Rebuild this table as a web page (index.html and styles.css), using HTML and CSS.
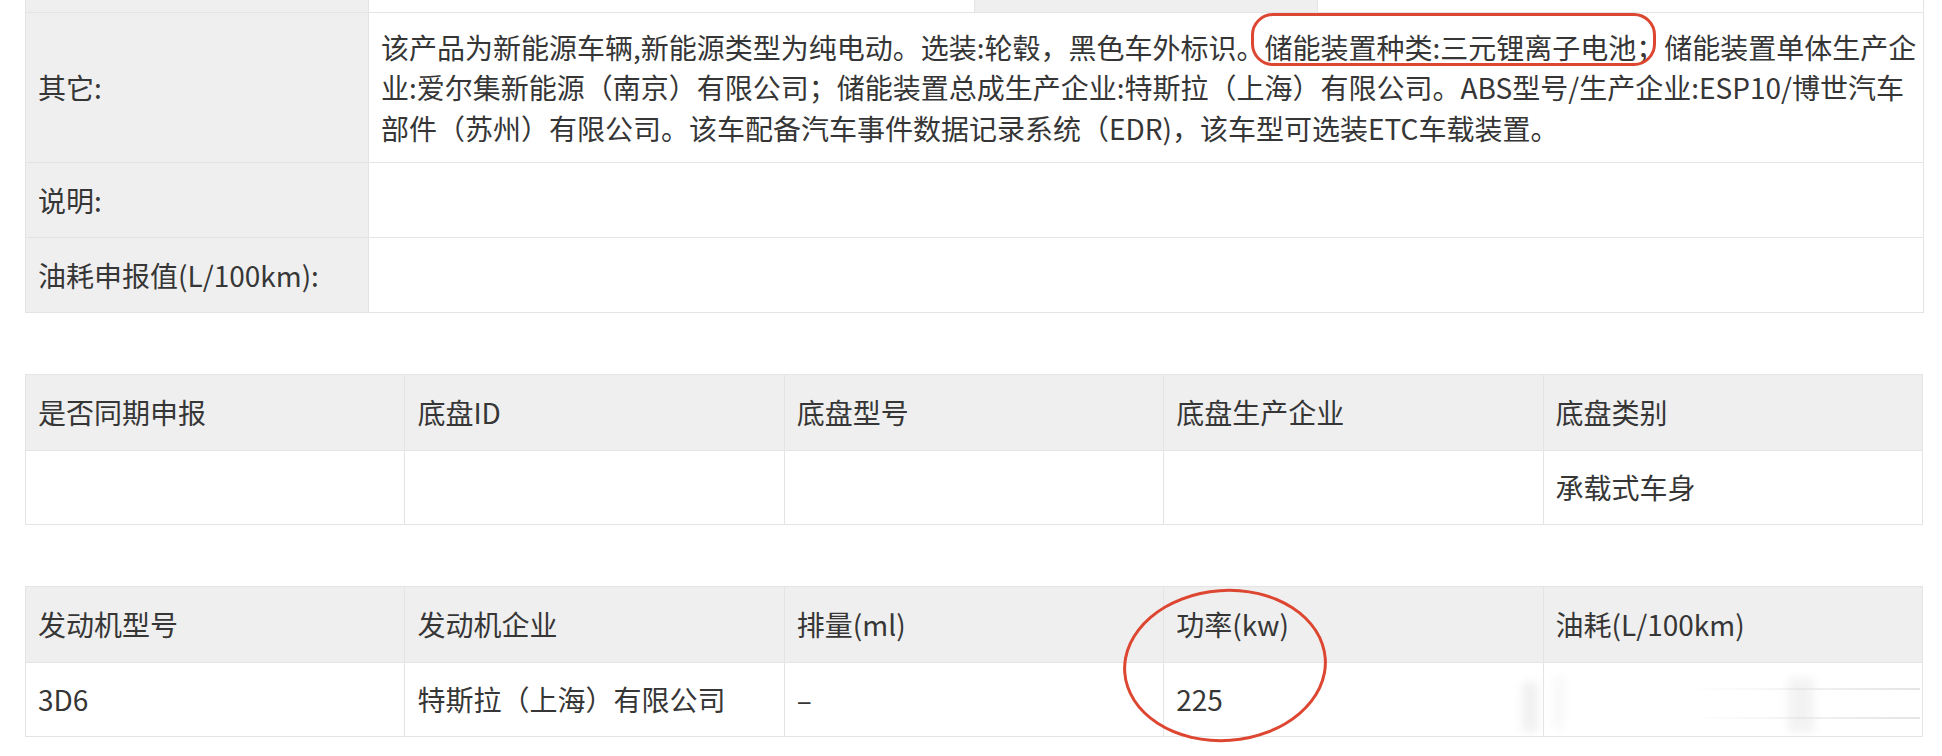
FILE: index.html
```html
<!DOCTYPE html>
<html lang="zh-CN">
<head>
<meta charset="utf-8">
<title>车辆参数</title>
<link rel="stylesheet" href="styles.css">
</head>
<body>
<div class="page">
  <table class="info">
    <colgroup>
      <col class="c-label"><col class="c-val1"><col class="c-label"><col class="c-val2">
    </colgroup>
    <tr class="r-cut">
      <td class="lbl"></td><td></td><td class="lbl"></td><td></td>
    </tr>
    <tr class="r-other">
      <td class="lbl">其它:</td>
      <td colspan="3" class="long">该产品为新能源车辆,新能源类型为纯电动。选装:轮毂，黑色车外标识。储能装置种类:三元锂离子电池；储能装置单体生产企<br>业:爱尔集新能源（南京）有限公司；储能装置总成生产企业:特斯拉（上海）有限公司。ABS型号/生产企业:ESP10/博世汽车<br>部件（苏州）有限公司。该车配备汽车事件数据记录系统（EDR)，该车型可选装ETC车载装置。</td>
    </tr>
    <tr class="r-std">
      <td class="lbl">说明:</td>
      <td colspan="3"></td>
    </tr>
    <tr class="r-std">
      <td class="lbl">油耗申报值(L/100km):</td>
      <td colspan="3"></td>
    </tr>
  </table>

  <table class="grid g-chassis">
    <tr class="head">
      <td>是否同期申报</td><td>底盘ID</td><td>底盘型号</td><td>底盘生产企业</td><td>底盘类别</td>
    </tr>
    <tr class="body">
      <td></td><td></td><td></td><td></td><td>承载式车身</td>
    </tr>
  </table>

  <table class="grid g-engine">
    <tr class="head">
      <td>发动机型号</td><td>发动机企业</td><td>排量(ml)</td><td>功率(kw)</td><td>油耗(L/100km)</td>
    </tr>
    <tr class="body">
      <td>3D6</td><td>特斯拉（上海）有限公司</td><td>–</td><td>225</td><td></td>
    </tr>
  </table>

  <div class="mark-rect"></div>
  <div class="mark-ellipse"></div>
  <div class="ghost g1"></div>
  <div class="ghost g2"></div>
  <div class="ghost g3"></div>
  <div class="ghost-line l1"></div>
  <div class="ghost-line l2"></div>
</div>
</body>
</html>
```
FILE: styles.css
```css
html, body {
  margin: 0;
  padding: 0;
  background: #ffffff;
}

body {
  font-family: "Noto Sans CJK SC", "Noto Sans", sans-serif;
  color: #363636;
  font-size: 28px;
}

.page {
  position: relative;
  width: 1942px;
  height: 756px;
  overflow: hidden;
  padding-left: 25px;
  box-sizing: border-box;
}

table {
  border-collapse: collapse;
  table-layout: fixed;
  width: 1898px;
}

td {
  border: 1px solid #e4e4e4;
  padding: 0 12px;
  vertical-align: middle;
  line-height: 41px;
  white-space: nowrap;
}

.info {
  margin-top: -1px;
}

.c-label { width: 343px; }
.c-val1 { width: 606px; }
.c-val2 { width: 606px; }

.lbl {
  background: #efefef;
}

.r-cut td { height: 12px; padding: 0; line-height: 0; }
.r-other td { height: 149px; }
.r-std td { height: 74px; }

.long {
  line-height: 40.5px;
}

.grid td {
  width: 20%;
}

.g-chassis { margin-top: 61px; }
.g-engine { margin-top: 61px; }

.grid .head td {
  background: #efefef;
  height: 75px;
}

.grid .body td {
  height: 73px;
}

.mark-rect {
  position: absolute;
  left: 1251px;
  top: 13px;
  width: 405px;
  height: 53px;
  box-sizing: border-box;
  border: 3px solid #dd4631;
  border-radius: 22px;
}

.mark-ellipse {
  position: absolute;
  left: 1123px;
  top: 589px;
  width: 204px;
  height: 153px;
  box-sizing: border-box;
  border: 3.5px solid #dd4631;
  border-radius: 50%;
  transform: rotate(-4deg);
}

.ghost {
  position: absolute;
  background: #dcdcdc;
  filter: blur(4px);
  opacity: 0.4;
}
.g1 { left: 1522px; top: 682px; width: 16px; height: 50px; }
.g2 { left: 1554px; top: 676px; width: 10px; height: 54px; opacity: 0.2; }
.g3 { left: 1788px; top: 678px; width: 26px; height: 54px; opacity: 0.35; }

.ghost-line {
  position: absolute;
  height: 2px;
  background: linear-gradient(to right, rgba(230,230,230,0), rgba(210,210,210,0.6));
}
.l1 { left: 1690px; top: 688px; width: 230px; }
.l2 { left: 1690px; top: 717px; width: 230px; }
```
